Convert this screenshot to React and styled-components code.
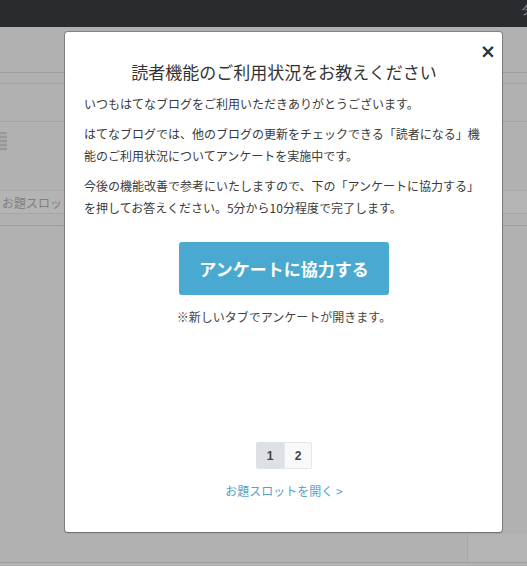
import styled, { createGlobalStyle } from "styled-components"

const GlobalStyle = createGlobalStyle`
  html, body {
    margin: 0;
    padding: 0;
    background: #b1b1b1;
    font-family: "Noto Sans CJK JP", "Noto Sans", sans-serif;
  }
`

const Page = styled.div`
  position: relative;
  width: 527px;
  height: 566px;
  overflow: hidden;
  background: #b1b1b1;
`

const TopBar = styled.div`
  height: 27px;
  background: #2a2b2f;
  display: flex;
  justify-content: flex-end;
  align-items: flex-start;
  color: #8a8a8a;
  font-size: 12px;
  line-height: 16px;
  padding-top: 2px;
  box-sizing: border-box;
  overflow: hidden;
  span {
    margin-right: -6px;
  }
`

const Row = styled.div`
  height: ${(p) => p.h}px;
  border-bottom: 1px solid ${(p) => p.line || "#a3a3a3"};
  background: ${(p) => p.bg || "transparent"};
  display: flex;
  align-items: center;
  box-sizing: border-box;
`

const GhostText = styled.span`
  font-size: 12px;
  color: #808080;
  margin-left: 2px;
  white-space: nowrap;
`

const GhostIcon = styled.div`
  width: 7px;
  height: 19px;
  margin-top: -30px;
  background: #a5a5a5;
  border-radius: 0 2px 2px 0;
  background-image: repeating-linear-gradient(
    to bottom,
    #999 0 2px,
    #a9a9a9 2px 4px
  );
`

const BottomStrip = styled.div`
  position: absolute;
  left: 0;
  right: 0;
  bottom: 3px;
  height: 28px;
  border-bottom: 1px solid #a0a0a0;
  display: flex;
  justify-content: flex-end;
`

const StripBox = styled.div`
  width: 59px;
  border-left: 1px solid #a8a8a8;
  background: #b4b4b4;
`

const Modal = styled.div`
  position: absolute;
  left: 65px;
  top: 32px;
  width: 437px;
  height: 500px;
  box-sizing: border-box;
  background: #fff;
  border-radius: 3px;
  box-shadow: 0 0 0 1px rgba(0, 0, 0, 0.25), 0 1px 2px rgba(0, 0, 0, 0.2);
  padding: 28px 18px 30px 19px;
  display: flex;
  flex-direction: column;
  color: #3a3a3a;
`

const Close = styled.button`
  position: absolute;
  top: 9px;
  right: 4px;
  border: 0;
  background: none;
  font-family: "DejaVu Sans", sans-serif;
  font-size: 19px;
  font-weight: bold;
  color: #333;
  line-height: 20px;
  padding: 0 2px;
  cursor: pointer;
`

const Title = styled.h2`
  margin: 0 0 9px;
  text-align: center;
  font-size: 17px;
  font-weight: normal;
  line-height: 24px;
  color: #333;
`

const Para = styled.p`
  margin: 0 0 8px;
  font-size: 12px;
  line-height: 22px;
  color: #3a3a3a;
`

const CTA = styled.a`
  align-self: center;
  margin-top: 15px;
  width: 210px;
  height: 53px;
  display: flex;
  align-items: center;
  justify-content: center;
  background: #4aa9d1;
  border-radius: 3px;
  color: #fff;
  font-size: 17px;
  font-weight: bold;
  text-decoration: none;
`

const Note = styled.p`
  margin: 11px 0 0;
  text-align: center;
  font-size: 12px;
  line-height: 22px;
  color: #444;
`

const Pager = styled.div`
  margin-top: auto;
  display: flex;
  justify-content: center;
`

const PageBtn = styled.span`
  width: 28px;
  height: 27px;
  box-sizing: border-box;
  display: flex;
  align-items: center;
  justify-content: center;
  font-family: "Liberation Sans", Arial, sans-serif;
  font-size: 12px;
  font-weight: bold;
  color: #444;
  background: ${(p) => (p.active ? "#dde1e6" : "#f8f9fa")};
  border: 1px solid ${(p) => (p.active ? "#dde1e6" : "#e4e7ea")};
  border-radius: ${(p) => (p.active ? "2px 0 0 2px" : "0 2px 2px 0")};
`

const SlotLink = styled.a`
  margin-top: 11px;
  text-align: center;
  font-size: 12px;
  line-height: 22px;
  color: #5d9fc7;
  text-decoration: none;
`

const App = () => {
  return (
    <Page>
      <GlobalStyle />
      <TopBar>
        <span>タ</span>
      </TopBar>
      <Row h={46} line="#9b9b9b" />
      <Row h={11} />
      <Row h={38} />
      <Row h={69} line="#aaaaaa">
        <GhostIcon />
      </Row>
      <Row h={23} bg="#b4b4b4" line="#a6a6a6">
        <GhostText>お題スロッ</GhostText>
      </Row>
      <Row h={12} line="#a0a0a0" />
      <BottomStrip>
        <StripBox />
      </BottomStrip>

      <Modal>
        <Close aria-label="閉じる">×</Close>
        <Title>読者機能のご利用状況をお教えください</Title>
        <Para>いつもはてなブログをご利用いただきありがとうございます。</Para>
        <Para>
          はてなブログでは、他のブログの更新をチェックできる「読者になる」機能のご利用状況についてアンケートを実施中です。
        </Para>
        <Para>
          今後の機能改善で参考にいたしますので、下の「アンケートに協力する」を押してお答えください。5分から10分程度で完了します。
        </Para>
        <CTA href="#">アンケートに協力する</CTA>
        <Note>※新しいタブでアンケートが開きます。</Note>
        <Pager>
          <PageBtn active>1</PageBtn>
          <PageBtn>2</PageBtn>
        </Pager>
        <SlotLink href="#">お題スロットを開く &gt;</SlotLink>
      </Modal>
    </Page>
  )
}

export default App
